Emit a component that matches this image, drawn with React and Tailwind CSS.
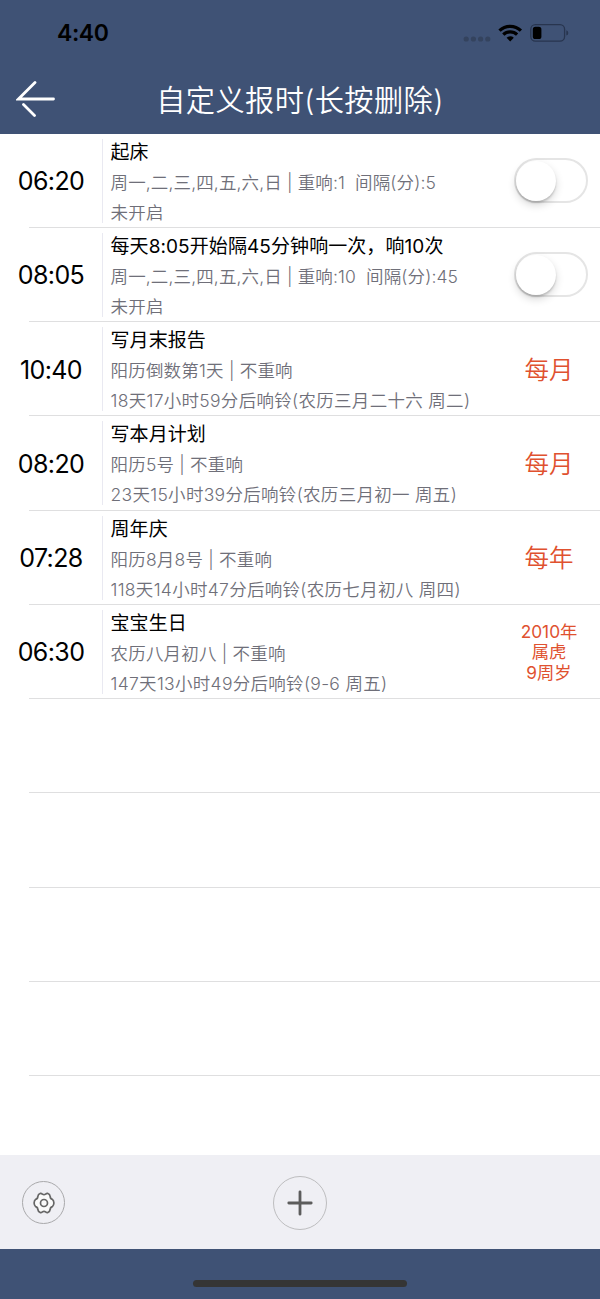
import React from 'react';

const alarms = [
  { time: '06:20', title: '起床', rule: '周一,二,三,四,五,六,日 | 重响:1  间隔(分):5', next: '未开启', toggle: true },
  { time: '08:05', title: '每天8:05开始隔45分钟响一次，响10次', rule: '周一,二,三,四,五,六,日 | 重响:10  间隔(分):45', next: '未开启', toggle: true },
  { time: '10:40', title: '写月末报告', rule: '阳历倒数第1天 | 不重响', next: '18天17小时59分后响铃(农历三月二十六 周二)', tag: '每月' },
  { time: '08:20', title: '写本月计划', rule: '阳历5号 | 不重响', next: '23天15小时39分后响铃(农历三月初一 周五)', tag: '每月' },
  { time: '07:28', title: '周年庆', rule: '阳历8月8号 | 不重响', next: '118天14小时47分后响铃(农历七月初八 周四)', tag: '每年' },
  { time: '06:30', title: '宝宝生日', rule: '农历八月初八 | 不重响', next: '147天13小时49分后响铃(9-6 周五)', lines: ['2010年', '属虎', '9周岁'] },
];

function Toggle() {
  return (
    <div className="ml-[4px] flex h-[45px] w-[74px] items-center rounded-full border-[2.5px] border-[#e5e5e5] bg-white">
      <div className="size-[40px] shrink-0 rounded-full bg-white shadow-[0_4px_8px_rgba(0,0,0,0.16),0_2px_2px_rgba(0,0,0,0.16)]" />
    </div>
  );
}

function StatusBar() {
  return (
    <div className="flex h-[66px] items-center justify-between pr-[31px] pl-[57px]">
      <div className="text-[23px] font-semibold leading-none tracking-[-0.4px] text-black">4:40</div>
      <div className="flex items-center">
        <svg className="h-[24px] w-[106px]" viewBox="463 21 106 24">
          <g fill="#34435e">
            <circle cx="466.2" cy="39" r="2.6" />
            <circle cx="473.4" cy="39" r="2.6" />
            <circle cx="480.6" cy="39" r="2.6" />
            <circle cx="487.8" cy="39" r="2.6" />
          </g>
          <g fill="none" stroke="#000" strokeWidth="3.2">
            <path d="M499.5 30.7a15.2 15.2 0 0 1 21.4 0" />
            <path d="M503.3 34.7a9.9 9.9 0 0 1 13.8 0" />
          </g>
          <path d="M506.6 37.8a5.2 5.2 0 0 1 7.2 0L510.2 41.5z" fill="#000" />
          <rect x="530.8" y="24.6" width="33.8" height="16.6" rx="4.6" fill="none" stroke="#28354f" strokeWidth="1.3" />
          <rect x="532.8" y="26.8" width="8.6" height="12.2" rx="2.6" fill="#000" />
          <path d="M566.3 30.2q2 .6 2 2.7t-2 2.7z" fill="#28354f" />
        </svg>
      </div>
    </div>
  );
}

export default function App() {
  return (
    <div className="flex h-[1299px] w-[600px] flex-col overflow-hidden bg-white font-['Inter','Noto_Sans_CJK_SC',sans-serif] whitespace-pre">
      <header className="h-[133.5px] shrink-0 bg-[#3f5275]">
        <StatusBar />
        <div className="grid h-[66px] grid-cols-[150px_300px_150px] items-center">
          <svg className="ml-[16px] h-[38px] w-[40px]" viewBox="16 80 40 38" fill="none" stroke="#fff" strokeWidth="2.8" strokeLinecap="round">
            <path d="M35 82.5L18.5 99H53.5M23.5 104.5L34.5 115.5" />
          </svg>
          <h1 className="pt-[3px] text-center text-[29.2px] font-[350] leading-none tracking-[0.4px] text-white">自定义报时(长按删除)</h1>
        </div>
      </header>

      <main className="flex-1 overflow-hidden">
        {alarms.map((a) => (
          <section key={a.time} className="relative flex h-[94.25px] items-start">
            <div className="flex h-full w-[102px] items-center justify-center pt-[2px] text-[25px] leading-none tracking-[-0.6px] text-black">{a.time}</div>
            <div className="mt-[5px] h-[84px] w-px bg-[#e9e9f1]" />
            <div className="flex-1 pt-[4px] pl-[7.5px]">
              <div className="h-[30px] text-[19px] leading-[30px] tracking-[0.08px] text-black">{a.title}</div>
              <div className={`h-[30px] text-[17.5px] font-[350] leading-[29px] text-[#6f6f79] ${a.toggle ? 'tracking-[0.13px]' : 'tracking-[0.2px]'}`}>{a.rule}</div>
              <div className="h-[30px] text-[17.5px] font-[350] leading-[30px] tracking-[0.3px] text-[#6f6f79]">{a.next}</div>
            </div>
            <div className="flex h-full w-[102px] flex-col items-center justify-center text-[#e0512f]">
              {a.toggle && <Toggle />}
              {a.tag && <span className="pt-[2px] text-[24.5px] font-[350] leading-none">{a.tag}</span>}
              {a.lines && a.lines.map((l) => <span key={l} className="relative top-[1px] text-[17.3px] font-[390] leading-[20.8px]">{l}</span>)}
            </div>
            <div className="absolute right-0 bottom-0 left-[29px] h-px bg-[#dfdfe0]" />
          </section>
        ))}
        {[1, 2, 3, 4].map((n) => (
          <div key={n} className="flex h-[94.25px] items-end pl-[29px]">
            <div className="h-px flex-1 bg-[#dfdfe0]" />
          </div>
        ))}
      </main>

      <footer className="shrink-0">
        <div className="grid h-[94px] grid-cols-3 items-center bg-[#efeff4] pt-[1px]">
          <div className="ml-[22px] flex size-[43px] items-center justify-center rounded-full border border-[#a9a9ab]">
            <svg className="size-[24px]" viewBox="0 0 24 24" fill="none" stroke="#666" strokeWidth="1.7" strokeLinejoin="round">
              <path fill="#fafafa" d="M8.500 2.300Q9.600 2.300 10.400 3.100Q12 4.300 13.600 3.100Q14.400 2.300 15.500 2.300Q18 3.200 18.200 5.600Q18.200 8 20.400 8.400Q21.800 9.600 21.900 12Q21.800 14.400 20.400 15.600Q18.200 16 18.200 18.400Q18 20.800 15.500 21.700Q14.400 21.700 13.600 20.900Q12 19.700 10.400 20.900Q9.600 21.700 8.500 21.700Q6 20.800 5.800 18.400Q5.800 16 3.600 15.600Q2.200 14.400 2.100 12Q2.200 9.600 3.600 8.400Q5.800 8 5.800 5.600Q6 3.200 8.500 2.300Z" />
              <circle cx="12" cy="12" r="3.5" />
            </svg>
          </div>
          <div className="flex size-[54px] items-center justify-center justify-self-center rounded-full border border-[#bdbdbf]">
            <svg className="size-[26px]" viewBox="0 0 26 26" stroke="#5c5c5c" strokeWidth="2.8" strokeLinecap="round">
              <path d="M13 1.800V24.200M1.800 13H24.200" />
            </svg>
          </div>
        </div>
        <div className="flex h-[50px] items-start justify-center bg-[#3f5275] pt-[31px]">
          <div className="h-[7px] w-[214px] rounded-full bg-[#353535]" />
        </div>
      </footer>
    </div>
  );
}
